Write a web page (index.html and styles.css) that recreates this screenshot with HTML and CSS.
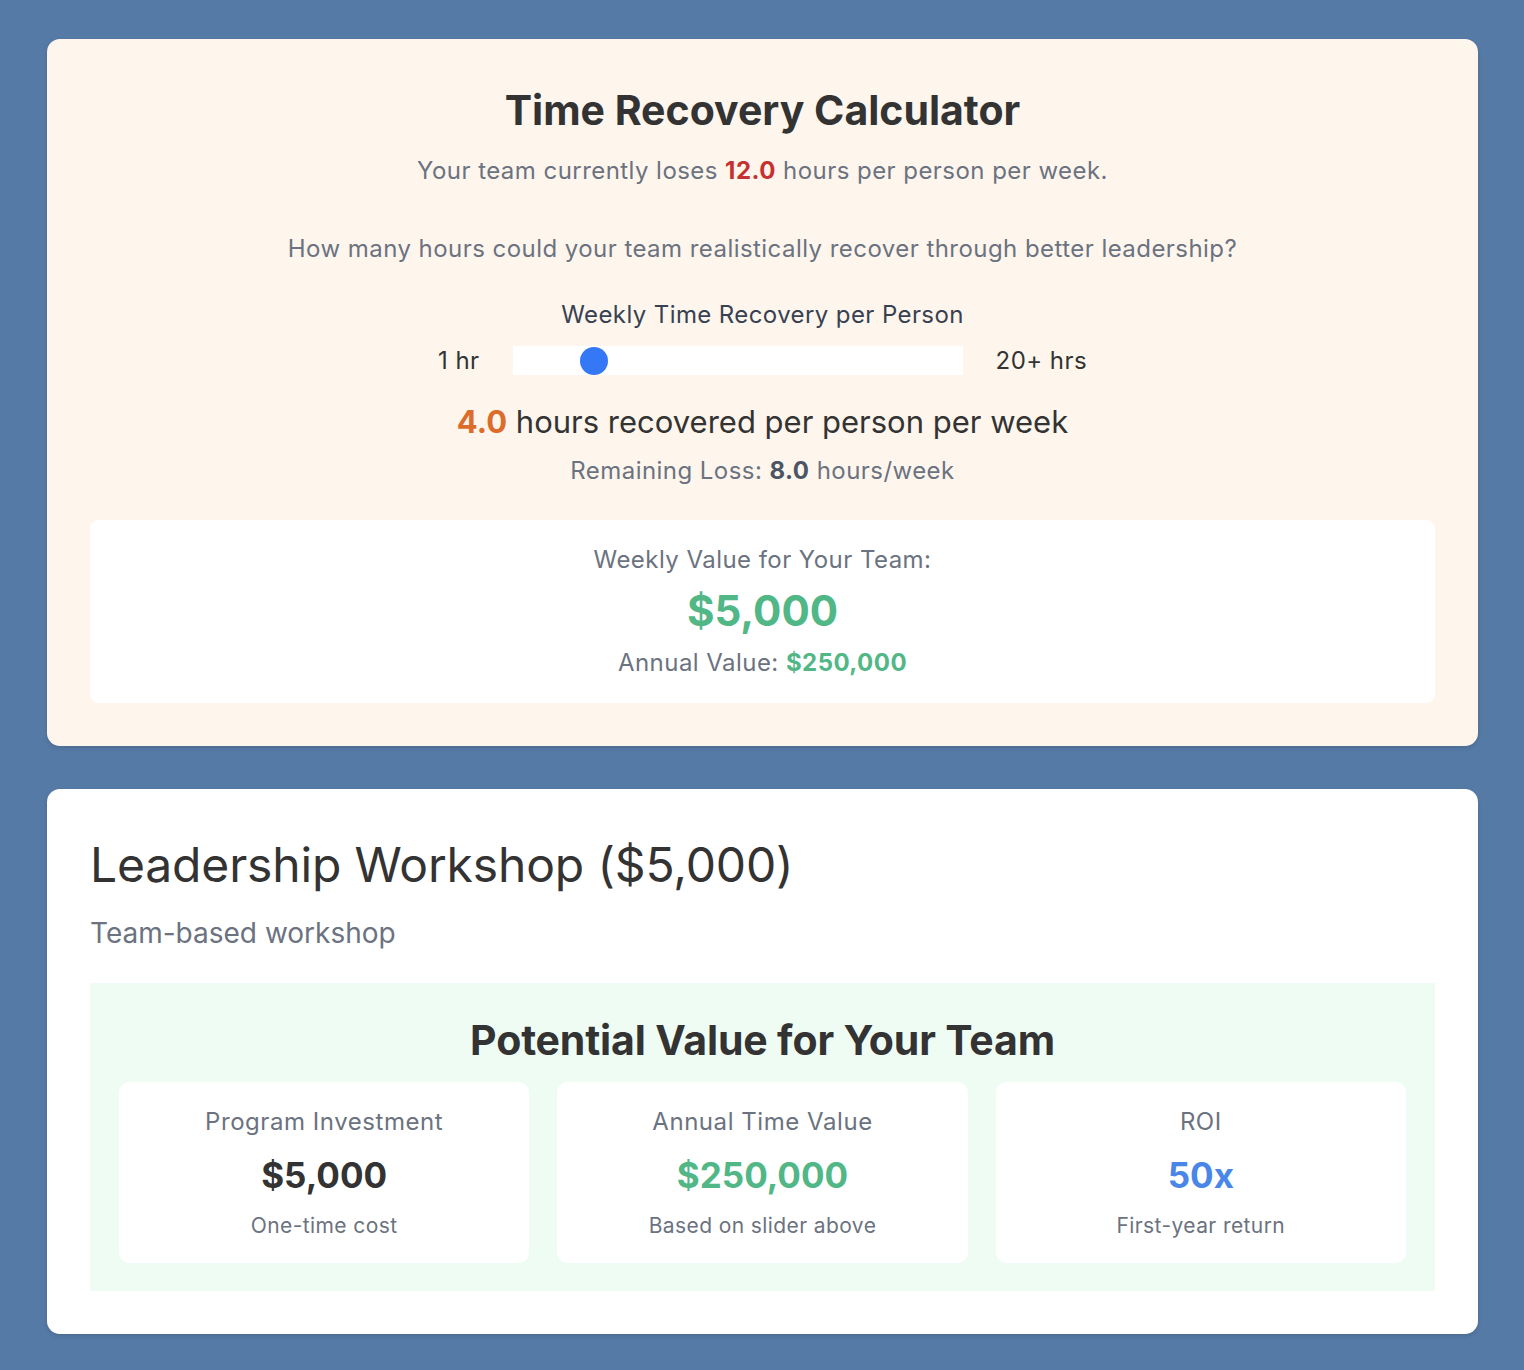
FILE: index.html
```html
<!DOCTYPE html>
<html lang="en">
<head>
<meta charset="utf-8">
<title>Time Recovery Calculator</title>
<link rel="stylesheet" href="styles.css">
</head>
<body>
<main class="page">
  <section class="card calc">
    <h1 class="calc-title">Time Recovery Calculator</h1>
    <p class="muted loss">Your team currently loses <strong class="red">12.0</strong> hours per person per week.</p>
    <p class="muted question">How many hours could your team realistically recover through better leadership?</p>
    <div class="slider-label">Weekly Time Recovery per Person</div>
    <div class="slider-row">
      <span class="end">1 hr</span>
      <div class="track"><span class="thumb"></span></div>
      <span class="end">20+ hrs</span>
    </div>
    <div class="recovered"><strong class="orange">4.0</strong> hours recovered per person per week</div>
    <div class="muted remaining">Remaining Loss: <strong>8.0</strong> hours/week</div>
    <div class="value-box">
      <div class="muted">Weekly Value for Your Team:</div>
      <div class="weekly">$5,000</div>
      <div class="muted annual">Annual Value: <strong class="green">$250,000</strong></div>
    </div>
  </section>

  <section class="card program">
    <h2 class="program-title">Leadership Workshop ($5,000)</h2>
    <p class="program-sub">Team-based workshop</p>
    <div class="potential">
      <h3 class="potential-title">Potential Value for Your Team</h3>
      <div class="stats">
        <div class="stat">
          <div class="stat-label">Program Investment</div>
          <div class="stat-value">$5,000</div>
          <div class="stat-note">One-time cost</div>
        </div>
        <div class="stat">
          <div class="stat-label">Annual Time Value</div>
          <div class="stat-value green">$250,000</div>
          <div class="stat-note">Based on slider above</div>
        </div>
        <div class="stat">
          <div class="stat-label">ROI</div>
          <div class="stat-value blue">50x</div>
          <div class="stat-note">First-year return</div>
        </div>
      </div>
    </div>
  </section>
</main>
</body>
</html>
```

FILE: styles.css
```css
* { box-sizing: border-box; }
html, body { margin: 0; padding: 0; }
body {
  background: #557aa5;
  font-family: Inter, "Liberation Sans", sans-serif;
  color: #333333;
}
.page {
  padding: 39px 46px 35px 47px;
  display: flex;
  flex-direction: column;
  gap: 43px;
}
.card {
  border-radius: 13px;
  padding: 43px;
  box-shadow: 0 2px 4px rgba(0,0,0,0.12);
}
.calc {
  background: #fef6ed;
  text-align: center;
  padding-top: 47px;
}
.calc-title {
  margin: 0;
  font-size: 41px;
  font-weight: 700;
  line-height: 48px;
  color: #333333;
}
.muted {
  color: #6b7280;
  font-size: 24px;
  line-height: 32px;
  letter-spacing: 0.45px;
}
.loss { margin: 21px 0 0; }
.question { margin: 46px 0 0; }
.red { color: #c53030; }
.orange { color: #dd6b2a; }
.green { color: #51b786; }
.blue { color: #4a86e8; }
.slider-label {
  margin-top: 34px;
  font-size: 24px;
  line-height: 32px;
  letter-spacing: 0.4px;
  color: #374151;
}
.slider-row {
  margin-top: 15px;
  display: flex;
  justify-content: center;
  align-items: center;
  gap: 33px;
  font-size: 24px;
  line-height: 29px;
  letter-spacing: 0.45px;
  color: #333333;
}
.track {
  width: 450px;
  height: 29px;
  background: #ffffff;
  display: flex;
  align-items: center;
  padding-left: 67px;
}
.thumb {
  width: 28px;
  height: 28px;
  border-radius: 50%;
  background: #3478f6;
}
.recovered {
  margin-top: 27px;
  font-size: 31px;
  line-height: 40px;
  color: #333333;
}
.remaining { margin-top: 13px; }
.remaining strong { color: #4b5563; }
.value-box {
  margin-top: 33px;
  background: #ffffff;
  border-radius: 9px;
  padding: 24px 20px 24px;
}
.weekly {
  font-size: 42px;
  font-weight: 700;
  line-height: 50px;
  color: #51b786;
  margin: 10px 0 11px;
}
.program { background: #ffffff; padding-top: 48px; }
.program-title {
  margin: 0;
  font-size: 48px;
  font-weight: 400;
  line-height: 56px;
  letter-spacing: -0.15px;
  color: #333333;
}
.program-sub {
  margin: 22px 0 0;
  font-size: 28px;
  line-height: 36px;
  color: #6b7280;
}
.potential {
  margin-top: 32px;
  background: #effcf4;
  padding: 33px 29px 28px;
}
.potential-title {
  margin: 0 0 18px;
  text-align: center;
  font-size: 41px;
  font-weight: 700;
  line-height: 48px;
  letter-spacing: -0.15px;
  color: #333333;
}
.stats {
  display: grid;
  grid-template-columns: repeat(3, 1fr);
  gap: 28px;
}
.stat {
  background: #ffffff;
  border-radius: 11px;
  text-align: center;
  padding: 24px 10px 22px;
}
.stat-label {
  font-size: 24px;
  line-height: 32px;
  letter-spacing: 0.55px;
  color: #6b7280;
}
.stat-value {
  margin: 16px 0 15px;
  font-size: 35px;
  font-weight: 700;
  line-height: 42px;
  color: #333333;
}
.stat-value.green { color: #51b786; }
.stat-value.blue { color: #4a86e8; }
.stat-note {
  font-size: 21px;
  line-height: 30px;
  letter-spacing: 0.4px;
  color: #6b7280;
}
```
